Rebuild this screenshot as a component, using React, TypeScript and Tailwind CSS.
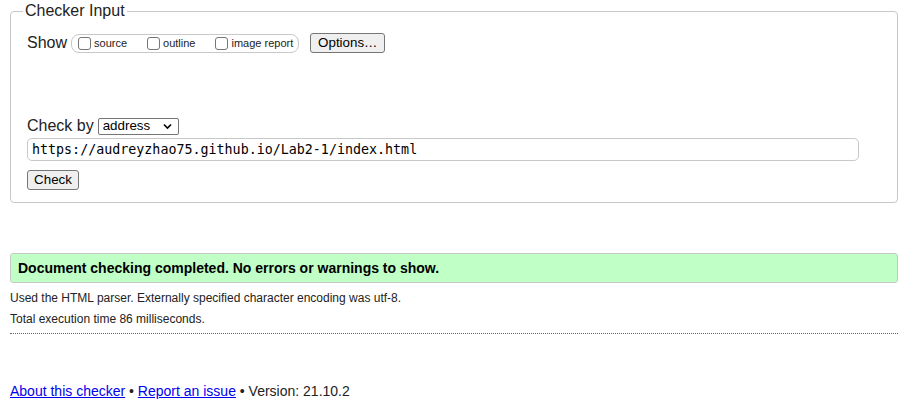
import React from "react";

function Box({ label }: { label: string }) {
  return (
    <span className="inline-flex items-center">
      <span className="inline-block w-[13px] h-[13px] border border-[#767676] rounded-[3px] bg-white" />
      <span className="ml-[3px] text-[11px] leading-[13px]">{label}</span>
    </span>
  );
}

export default function App() {
  return (
    <div className="bg-white text-[#222] min-h-[410px] font-['Liberation_Sans',Arial,sans-serif] pt-[2px]">
      <fieldset className="ml-[10px] mr-[23px] border border-[#c8c8c8] rounded-[4px] pl-[16px] pr-[16px] pt-[13px] pb-[12px]">
        <legend className="ml-[-4px] px-[2px] text-[16px] leading-[18px]">Checker Input</legend>
        <div className="flex items-center h-[20px]">
          <span className="text-[16px] leading-[18px]">Show</span>
          <span className="ml-[4px] flex items-center h-[19px] border border-[#c8c8c8] rounded-[8px] pl-[6px] pr-[5px] gap-[20px]">
            <Box label="source" />
            <Box label="outline" />
            <Box label="image report" />
          </span>
          <button className="ml-[11px] h-[20px] w-[75px] border border-[#767676] rounded-[3px] bg-[#efefef] text-[13.33px] leading-[18px] text-black">
            Options…
          </button>
        </div>
        <div className="mt-[64px] flex items-center h-[18px]">
          <span className="text-[16px] leading-[18px]">Check by</span>
          <span className="ml-[4px] relative inline-flex items-center h-[17px] w-[81px] border border-[#767676] rounded-[2px] bg-white text-[13.33px] text-black pl-[4px]">
            address
            <svg className="absolute right-[6px] top-[4px]" width="9" height="7" viewBox="0 0 9 7">
              <path d="M1 1.5 L4.5 5 L8 1.5" fill="none" stroke="#000" strokeWidth="1.6" />
            </svg>
          </span>
        </div>
        <div className="mt-[3px] h-[23px] w-[832px] border border-[#c8c8c8] rounded-[5px] flex items-center pl-[4px] font-['DejaVu_Sans_Mono',monospace] text-[13.33px] text-black">
          https://audreyzhao75.github.io/Lab2-1/index.html
        </div>
        <button className="mt-[9px] block h-[20px] w-[52px] border border-[#767676] rounded-[3px] bg-[#efefef] text-[13.33px] leading-[18px] text-black">
          Check
        </button>
      </fieldset>
      <div className="ml-[10px] mr-[23px] mt-[50px] h-[30px] border border-[#c8c8c8] rounded-[3px] bg-[#c0ffc6] flex items-center pl-[7px] text-[14px] font-bold text-black">
        Document checking completed. No errors or warnings to show.
      </div>
      <p className="mx-[10px] mt-[8px] text-[12px] leading-[14px]">
        Used the HTML parser. Externally specified character encoding was utf-8.
      </p>
      <p className="mx-[10px] mt-[7px] text-[12px] leading-[14px]">Total execution time 86 milliseconds.</p>
      <div className="ml-[10px] mr-[23px] mt-[7px] border-b border-dotted border-[#666]" />
      <p className="mx-[10px] mt-[49px] text-[14px] leading-[16px]">
        <a className="text-[#0000ee] underline">About this checker</a>
        {" • "}
        <a className="text-[#0000ee] underline">Report an issue</a>
        {" • Version: 21.10.2"}
      </p>
    </div>
  );
}
